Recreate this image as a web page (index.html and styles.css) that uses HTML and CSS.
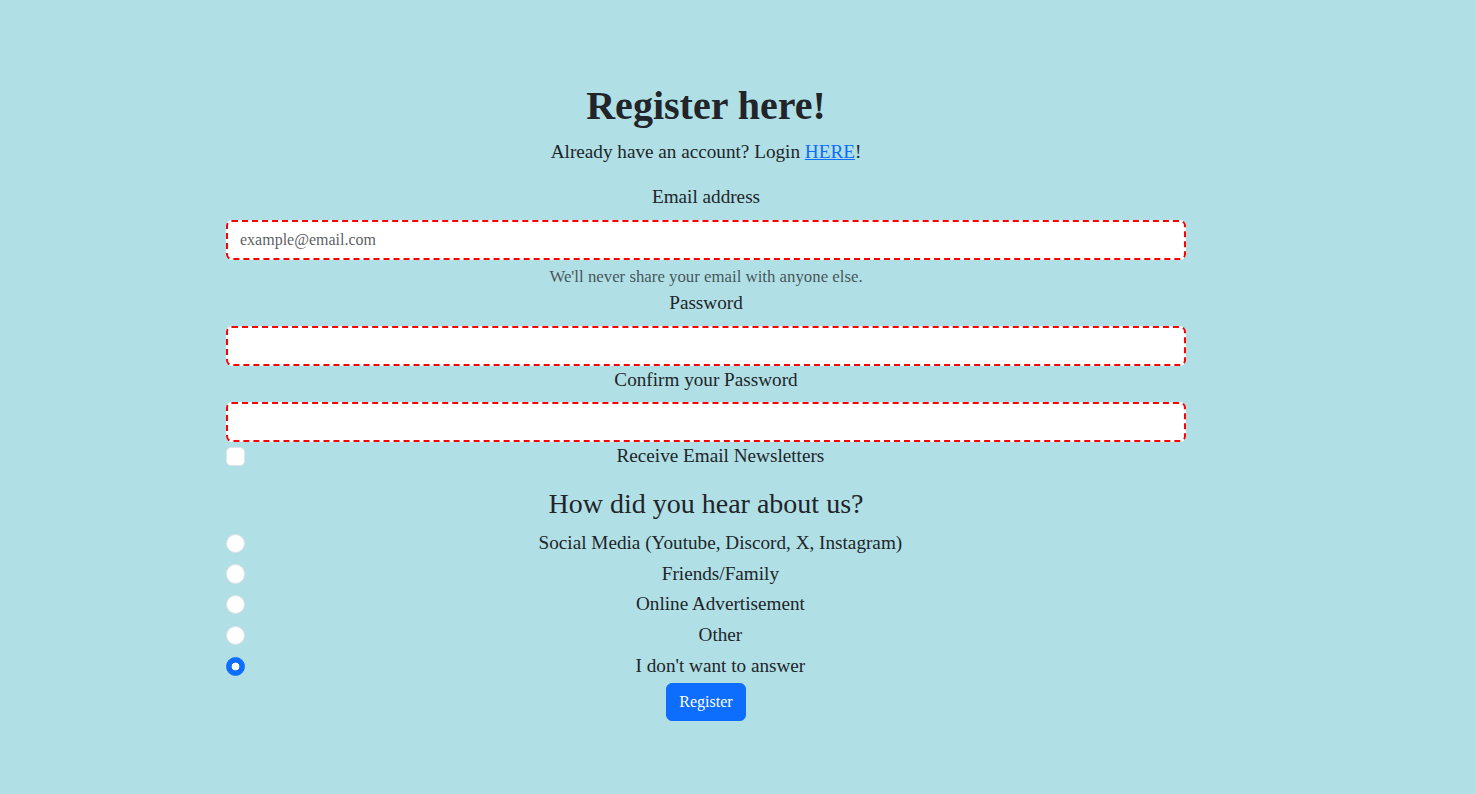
FILE: index.html
```html
<!DOCTYPE html>
<html lang="en">
<head>
<meta charset="utf-8">
<title>Register</title>
<link rel="stylesheet" href="styles.css">
</head>
<body>
<main class="page">
  <div class="panel">
    <h1 class="title">Register here!</h1>
    <p class="lead">Already have an account? Login <a class="link" href="#">HERE</a>!</p>
    <form class="form">
      <div class="field">
        <label class="label" for="email">Email address</label>
        <input class="control" id="email" type="email" placeholder="example@email.com">
        <div class="help">We'll never share your email with anyone else.</div>
      </div>
      <div class="field">
        <label class="label" for="pw">Password</label>
        <input class="control" id="pw" type="password">
      </div>
      <div class="field">
        <label class="label" for="pw2">Confirm your Password</label>
        <input class="control" id="pw2" type="password">
      </div>
      <div class="check">
        <input class="check-input box" type="checkbox" id="news">
        <label class="check-label" for="news">Receive Email Newsletters</label>
      </div>
      <h3 class="subtitle">How did you hear about us?</h3>
      <div class="check">
        <input class="check-input round" type="radio" name="src" id="r1">
        <label class="check-label" for="r1">Social Media (Youtube, Discord, X, Instagram)</label>
      </div>
      <div class="check">
        <input class="check-input round" type="radio" name="src" id="r2">
        <label class="check-label" for="r2">Friends/Family</label>
      </div>
      <div class="check">
        <input class="check-input round" type="radio" name="src" id="r3">
        <label class="check-label" for="r3">Online Advertisement</label>
      </div>
      <div class="check">
        <input class="check-input round" type="radio" name="src" id="r4">
        <label class="check-label" for="r4">Other</label>
      </div>
      <div class="check">
        <input class="check-input round" type="radio" name="src" id="r5" checked>
        <label class="check-label" for="r5">I don't want to answer</label>
      </div>
      <button class="btn" type="submit">Register</button>
    </form>
  </div>
</main>
</body>
</html>
```
FILE: styles.css
```css
*, *::before, *::after { box-sizing: border-box; }

html, body {
  margin: 0;
  padding: 0;
  background: #b0dfe5;
  height: 100%;
}

body {
  font-family: "Liberation Serif", "Times New Roman", serif;
  color: #212529;
  font-size: 16px;
  line-height: 1.5;
}

.page {
  width: 1412px;
  padding-top: 82px;
}

.panel {
  width: 960px;
  margin: 0 auto;
  text-align: center;
}

.title {
  font-size: 40px;
  line-height: 1.2;
  font-weight: 700;
  margin: 0 0 8px;
}

.lead {
  font-size: 19.2px;
  line-height: 1.5;
  margin: 0 0 16px;
}

.link {
  color: #0d6efd;
  text-decoration: underline;
}

.form {
  font-size: 19.2px;
  line-height: 1.5;
}

.label {
  display: inline-block;
  margin-bottom: 8px;
}

.control {
  display: block;
  width: 100%;
  padding: 6px 12px;
  font-family: "Liberation Serif", "Times New Roman", serif;
  font-size: 16px;
  line-height: 1.5;
  color: #212529;
  background: #fff;
  border: 2px dashed #ff0000;
  border-radius: 6px;
  outline: none;
  margin: 0;
}

.control::placeholder {
  color: rgba(33, 37, 41, 0.75);
}

.help {
  margin-top: 4px;
  font-size: 0.875em;
  color: rgba(33, 37, 41, 0.75);
}

.check {
  display: block;
  min-height: 24px;
  padding-left: 1.5em;
  margin-bottom: 2px;
}

.check-input {
  float: left;
  font-size: inherit;
  margin: 0.25em 0 0 -1.5em;
  width: 1em;
  height: 1em;
  -webkit-appearance: none;
  appearance: none;
  background: #fff;
  border: 1px solid #dee2e6;
}

.box {
  border-radius: 0.25em;
}

.round {
  border-radius: 50%;
}

.round:checked {
  border-color: #0d6efd;
  background: radial-gradient(circle, #fff 0 3.6px, #0d6efd 4.2px);
}

.subtitle {
  font-size: 28px;
  line-height: 1.2;
  font-weight: 400;
  margin: 16px 0 8px;
}

.btn {
  display: inline-block;
  padding: 6px 12px;
  font-family: "Liberation Serif", "Times New Roman", serif;
  font-size: 16px;
  line-height: 1.5;
  color: #fff;
  background: #0d6efd;
  border: 1px solid #0d6efd;
  border-radius: 6px;
  cursor: pointer;
}
```
